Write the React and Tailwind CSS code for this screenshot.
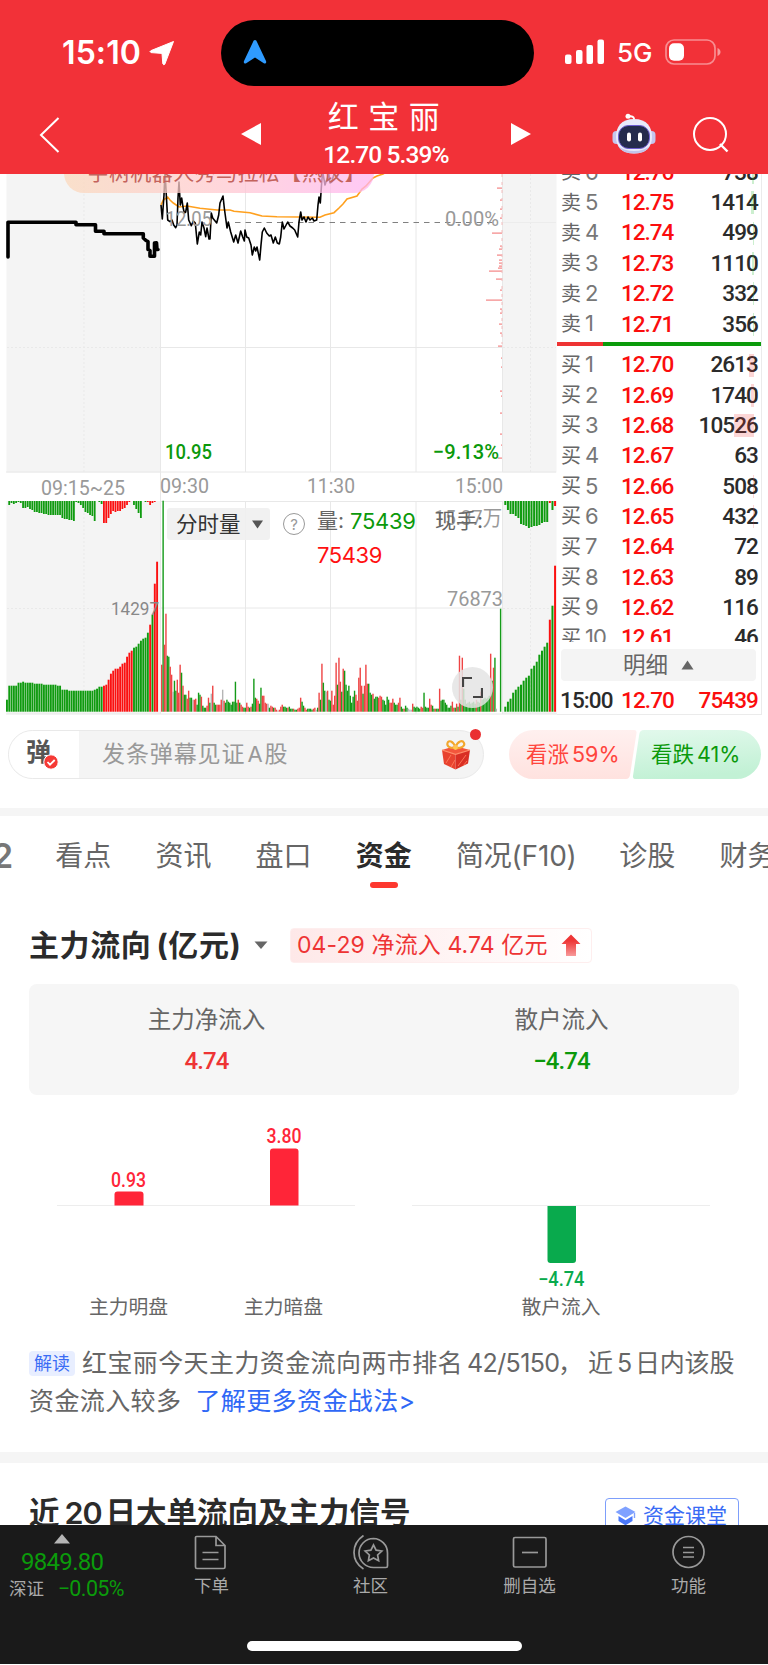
import React from 'react';

const SELL = [
  ['6', '12.76', '738', 2],
  ['5', '12.75', '1414', 3],
  ['4', '12.74', '499', 1],
  ['3', '12.73', '1110', 2],
  ['2', '12.72', '332', 1],
  ['1', '12.71', '356', 1],
];

const BUY = [
  ['1', '12.70', '2613', 5],
  ['2', '12.69', '1740', 3],
  ['3', '12.68', '10526', 20],
  ['4', '12.67', '63', 0],
  ['5', '12.66', '508', 1],
  ['6', '12.65', '432', 1],
  ['7', '12.64', '72', 0],
  ['8', '12.63', '89', 0],
  ['9', '12.62', '116', 0],
  ['10', '12.61', '46', 0],
];

// r = up, g = down, x = flat, number = height in px
const MINUTE_VOLUME =
  'r47 g211 r67 r98 g56 g55 r45 r37 x20 g31 g21 r32 r19 r47 g39 r26 g17 g17 r13 r21 g14 g14 x12 r12 r13 g7 g19 g17 r15 g6 g4 g4 r6 r14 g9 x18 r26 g9 g7 r7 r7 r7 r12 x22 r11 g9 g12 g10 g9 g7 g10 g10 g30 g9 r12 g9 r7 r5 g4 g4 r9 r5 g4 r5 g8 g33 g14 r13 r11 g8 g24 r16 r16 r9 r8 x8 g4 r6 r5 g4 r4 r2 x1 r2 r5 r7 g5 g5 g4 r4 g5 g3 g3 r3 g2 g2 r3 r4 r14 g10 g6 r4 r2 g3 g3 g3 g2 r3 r4 x2 g4 r19 g12 r48 g29 g21 x20 r21 g12 g11 r21 r7 r16 r49 g27 r54 r30 g20 r43 g41 g27 g21 g26 g16 g9 g15 g21 r17 r11 r34 r44 r26 g18 r26 r47 r28 g28 g19 g17 r18 g13 g15 g15 r14 r16 r15 g12 g11 g7 g15 g12 r9 r9 r13 g9 g7 g7 r9 r14 g5 g3 r3 g6 g4 x3 x2 x2 r8 g5 g4 g5 g4 g3 r5 r4 g19 g5 g4 g4 r13 r7 g6 g3 r3 g3 g3 r23 g11 g12 g12 g9 g7 g4 g4 g6 r10 r4 g4 r8 g5 r56 g12 r54 g23 g12 g8 g9 g10 g8 g9 g10 g8 r12 g10 g9 r20 g12 g13 g14 g13 g14 g16 r58 g31 r44 g54 x3 x0 x0 g103';

const AUCTION_VOLUME =
  'g12 g26 g26 g26 g26 g29 g29 g30 g29 g29 g29 g29 g28 g28 g28 g28 g27 g27 g27 g27 g27 g27 g26 g26 g22 g22 g22 g21 g21 g21 g21 g21 g21 g21 g21 g21 g21 g21 g22 g23 g25 g25 r26 r27 r32 r38 r41 r43 r43 r45 r48 r49 r55 r59 r61 g64 g65 g68 g71 g73 g74 g79 r87 g97 r128 r150';

const AUCTION_UNMATCHED =
  'x0 g4 g2 g3 g2 g1 g2 g7 g7 g6 g8 g9 g11 g11 g12 g12 g13 g13 g14 g14 g14 g14 g14 g14 g17 g18 g18 g19 g19 g20 g1 g2 g4 g7 g11 g12 g14 g15 g20 x0 g1 g3 r22 r22 r17 r13 r10 r11 r10 r10 r8 r7 r4 r1 x0 g4 g8 g12 g17 x0 g1 r1 r4 r2 r1 x0';

const CLOSE_VOLUME =
  'g5 g10 g13 g19 g22 g25 g27 g31 g34 g36 g43 g46 g50 g57 g61 g65 g69 r92 g106 r146';

const CLOSE_UNMATCHED =
  'g4 g9 g13 g13 g15 g17 g23 g24 g25 g27 g26 g25 g25 g24 g22 g21 g21 r2 g9 r5';

const PRICE_LINE =
  '161,205 162.3,219 164,195 165,172 166.3,195 167.7,220 170,221.7 172,220 173.7,225 175.7,227.7 177,225 178,198 179,182 180.3,205 181.7,198 183,207 184.3,213 185.7,212 187.3,203 188.7,220 191.3,225.7 193.3,221 195.3,223 197.3,244 199.3,232 200.7,235 202,222 204,228 205.7,236.7 207,228 209,239 210,239 211.3,213 212.7,218 216.7,223 218.7,215 220,203 223,196 224.3,208 227,228 228.3,222 230.7,232 233.7,242 235.7,235 238,243 240.7,231 242.7,237 244.3,241 245,230 246.7,237 248.7,238 251,245 252.3,255 254.3,247 255.7,251 257,247 259.7,260 261,245 262.3,232 264.3,228 266.7,233 269.3,236 271,235 273.3,243 275.3,237 277.3,243 279.3,244 280.7,237 282.3,222 284,229 287.7,222 290,226 292.7,228 294.7,230 297.7,237 299,222 300.7,212 302,220 304,217 306,222 308,217 310,220 312.3,218 314,221 316.7,220 318,205 319,197 320.3,203 321.7,182 322.7,172 325,185 327.3,178 328.7,173 330,183 331.7,182 334,174 335,168';

const AVG_LINE =
  '161,205 163.3,200 167.7,197 170,200 173.3,203 179,207 187,206 200,208.3 217,210 230,210 234,211.3 250,212.7 262,216 277,216.7 320,217.3 325,215 334,212.7 339,208 343,204 347,199 357,196 362,189 366,186 373,178 377,176 383,174 390,170';

const AUCTION_LINE =
  '8,257 8,222.3 76,222.3 76,224.7 95.5,224.7 95.5,231.3 104,231.3 104,233.7 143.3,233.7 143.3,238 146,240.5 148,241.5 148,249.5 150,250.5 150,256.3 154.5,256.3 154.5,243 156.5,242.7 157,249.5 158,249.5';

const TICKS = [
  [188, 5], [200, 2], [209, 2], [218, 2], [233, 10], [246, 2], [249, 3], [255, 5], [260, 3], [263, 3], [266, 3],
  [271, 13], [268, 4], [279, 6], [290, 2], [300, 16], [309, 2], [313, 2], [324, 3], [333, 2], [346, 4], [358, 1], [367, 1],
  [391, 2], [396, 1], [413, 2], [434, 2], [445, 1], [458, 4],
];

const COLORS = { r: '#fb1010', g: '#0f9b0f', x: '#b5b5b5' };
const SOFT = { r: '#ee4444', g: '#149a18', x: '#b5b5b5' };

const Bars = ({ data, x, step, width, base, down, colors = COLORS }) => (
  <g>
    {data.split(' ').map((item, i) => {
      const h = Number(item.slice(1));
      return (
        <rect key={i} x={x + i * step} y={down ? base : base - h} width={width} height={h} fill={colors[item[0]]} />
      );
    })}
  </g>
);

const ChartText = ({ x, y, w, size = 21, fill = '#999', weight = 400, children }) => (
  <text x={x} y={y} fontSize={size} fill={fill} fontWeight={weight} textLength={w} lengthAdjust="spacingAndGlyphs">
    {children}
  </text>
);

const StatusBar = () => (
  <div className="flex h-[100px] pt-5">
    <div className="flex w-[221px] pl-[62px] pt-[13px]">
      <span className="w-[87px] whitespace-nowrap text-[32px] font-semibold leading-10 tracking-[0.1px]">15:10</span>
      <svg width="26" height="26" viewBox="0 0 26 26" className="mt-[7px]">
        <path d="M24.5 1.5 15.8 24.2Q14.8 25.6 13.8 23.8L13 13.4 2 12.6Q0 11.6 2 10.6Z" fill="#fff" stroke="#fff" strokeLinejoin="round" />
      </svg>
    </div>
    <div className="h-[66px] w-[313px] rounded-full bg-black pl-[22px] pt-[19px]">
      <svg width="24" height="26" viewBox="0 0 24 26">
        <path d="M12 1c1 0 1.6.8 2 2l9 19c.7 2-.6 3.2-2.2 2.2L12 18.500l-8.800 5.700C1.600 25.200.300 24 1 22L10 3c.400-1.200 1-2 2-2Z" fill="#2f9bff" />
      </svg>
    </div>
    <div className="flex pl-[31px] pt-[19px]">
      <svg width="40" height="26" viewBox="0 0 40 26">
        <rect x="0" y="15.500" width="6.500" height="9.500" rx="2" fill="#fff" />
        <rect x="11" y="11" width="6.500" height="14" rx="2" fill="#fff" />
        <rect x="21.500" y="6" width="6.500" height="19" rx="2" fill="#fff" />
        <rect x="32.500" y="0.500" width="6.500" height="24.500" rx="2" fill="#fff" />
      </svg>
      <span className="ml-3 w-[37px] text-[26px] font-medium leading-[28px]">5G</span>
      <svg width="58" height="26" viewBox="0 0 58 26" className="ml-[11px]">
        <rect x="1" y="1" width="49" height="24" rx="8" fill="none" stroke="#fff" strokeOpacity=".45" strokeWidth="1.700" />
        <rect x="4" y="4.200" width="15" height="17.500" rx="5" fill="#fff" />
        <path d="M52.500 9c4 1.500 4 6.500 0 8Z" fill="#fff" fillOpacity=".5" />
      </svg>
    </div>
  </div>
);

const Robot = () => (
  <svg width="46" height="42" viewBox="0 0 46 42">
    <path d="M23 8V5.500Q22.500 3 17 3" fill="none" stroke="#fff" strokeWidth="1.800" />
    <circle cx="17" cy="3.200" r="2.500" fill="#fff" />
    <rect x="1.500" y="18" width="8" height="13" rx="4" fill="#c5c6ee" />
    <rect x="36.500" y="18" width="8" height="13" rx="4" fill="#c5c6ee" />
    <path d="M23 6C36 6 41 14 41 24S35 40.500 23 40.500 5 34 5 24 10 6 23 6Z" fill="#e9eafb" />
    <path d="M7 33Q13 38 23 38t16-5Q35 40.500 23 40.500T7 33Z" fill="#c3c4ea" />
    <rect x="7.500" y="12.500" width="31" height="23" rx="10" fill="#252b4d" stroke="#6c5bd0" strokeWidth="1" />
    <rect x="16" y="19.500" width="4" height="9" rx="2" fill="#fff" />
    <rect x="27" y="19.500" width="4" height="9" rx="2" fill="#fff" />
  </svg>
);

const StockHeader = () => (
  <div className="flex h-[74px]">
    <svg width="22" height="38" viewBox="0 0 22 38" className="ml-[38px] mt-4">
      <path d="M20.500 2 3 19 20.500 36" fill="none" stroke="#fff" strokeWidth="2" />
    </svg>
    <svg width="22" height="24" viewBox="0 0 22 24" className="ml-[180px] mt-[22px]">
      <path d="M1 12 21 1v22Z" fill="#fff" />
    </svg>
    <div className="flex w-[248px] flex-col items-center">
      <div className="mt-[-2px] pl-[5px] text-[31px] leading-[38px] tracking-[9.5px]">红宝丽</div>
      <div className="whitespace-nowrap pt-px font-['Roboto'] text-[24.5px] font-medium leading-[36px] tracking-[-0.9px]">12.70 5.39%</div>
    </div>
    <svg width="22" height="24" viewBox="0 0 22 24" className="mt-[22px]">
      <path d="M21 12 1 1v22Z" fill="#fff" />
    </svg>
    <div className="ml-[79px] mt-[13px]">
      <Robot />
    </div>
    <svg width="38" height="38" viewBox="0 0 38 38" className="ml-[35px] mt-4">
      <circle cx="18" cy="18" r="16" fill="none" stroke="#fff" strokeWidth="2" />
      <path d="m28 28 7.500 7.500" stroke="#fff" strokeWidth="2.400" />
    </svg>
  </div>
);

const MinuteChart = () => (
  <svg width="557" height="541" viewBox="0 174 557 541" className="block" fontFamily="Roboto, 'Noto Sans CJK SC', sans-serif">
    <defs>
      <linearGradient id="danmu" x1="0" x2="1">
        <stop offset="0" stopColor="#fbd9bd" />
        <stop offset=".5" stopColor="#ffc9cf" />
        <stop offset="1" stopColor="#ffb6f2" />
      </linearGradient>
    </defs>

    {/* call auction panels */}
    <path d="M6.500 174h154v298.500H6.500ZM502.500 174h54v298.500h-54ZM6.500 501h154v213H6.500ZM502.500 501h54v213h-54Z" fill="#f4f4f4" />
    <path d="M84 174v298M530.500 174v298M7 347.500h153M503 347.500h53M84 501v213M530.500 501v213M7 608.500h153M503 608.500h53" stroke="#e9e9e9" strokeDasharray="2 2" fill="none" />
    <path d="M160.500 174v540M245.500 174v298M330.500 174v298M416 174v298M502.500 174v298M160 347.500h342M6 472h550M245.500 501v213M330.500 501v213M416 501v213M502.500 501v213M160 501.500h342M160 608h342M6 714h551" stroke="#e8e8e8" fill="none" />
    <path d="M7 222.500h153M502 222.500h54" stroke="#ececec" fill="none" />
    <path d="M235 222.500h263" stroke="#808080" strokeDasharray="5.500 5" />

    {TICKS.map(([y, w]) => (
      <rect key={y} x={502 - w} y={y - 0.7} width={w} height="1.700" fill="#f7a8a8" />
    ))}
    <path d="M502 174v170" stroke="#f3bcbc" strokeDasharray="3 5" />

    <polyline points={AVG_LINE} fill="none" stroke="#ffa01e" strokeWidth="1.600" />
    <polyline points={PRICE_LINE} fill="none" stroke="#000" strokeWidth="1.600" strokeLinejoin="round" />
    <polyline points={AUCTION_LINE} fill="none" stroke="#000" strokeWidth="3.600" strokeLinejoin="round" strokeLinecap="round" />

    <ChartText x="165.500" y="226" w="46.500">12.05</ChartText>
    <ChartText x="445" y="226" w="54">0.00%</ChartText>
    <ChartText x="165" y="459" w="47" fill="#0b990b" weight="500">10.95</ChartText>
    <ChartText x="433" y="459" w="66" fill="#0b990b" weight="500">−9.13%</ChartText>

    {/* danmu bubble passing over the price line */}
    <rect x="64" y="153" width="310" height="40" rx="20" fill="url(#danmu)" opacity=".75" />
    <text x="87.500" y="179.500" fontSize="21" fill="#c4625c" textLength="278">宇树机器人秀马拉松【热议】</text>

    <ChartText x="41" y="494.500" w="84">09:15~25</ChartText>
    <ChartText x="160" y="493" w="49">09:30</ChartText>
    <ChartText x="307" y="493" w="48">11:30</ChartText>
    <ChartText x="455" y="493" w="48">15:00</ChartText>

    <Bars data={AUCTION_UNMATCHED} x={6} step={2.31} width={1.8} base={501} down />
    <Bars data={AUCTION_VOLUME} x={6} step={2.31} width={1.9} base={711.7} />
    <Bars data={MINUTE_VOLUME} x={161} step={1.418} width={1.4} base={711.7} colors={SOFT} />
    <Bars data={CLOSE_UNMATCHED} x={504.3} step={2.62} width={2} base={501} down />
    <Bars data={CLOSE_VOLUME} x={504.3} step={2.62} width={2} base={711.7} />

    <ChartText x="111" y="615" w="48" size="17.500" fill="#888">14297</ChartText>
    <ChartText x="447" y="606" w="56">76873</ChartText>
    <ChartText x="434" y="525" w="68">15.37万</ChartText>
  </svg>
);

const ChartArea = () => (
  <div className="relative w-[557px] shrink-0">
    <MinuteChart />
    <div className="absolute left-[167px] top-[334px] flex h-8 w-[103px] items-center rounded-[3px] bg-[#f0f0f0]/90 pl-[9px] text-[21.5px] text-[#333]">
      分时量
      <svg width="13" height="9" viewBox="0 0 13 9" className="ml-2.5">
        <path d="M1 .5h11L6.500 8.500Z" fill="#555" />
      </svg>
    </div>
    <div className="absolute left-[283px] top-[339px] flex h-[22px] w-[22px] items-center justify-center rounded-full border-[1.5px] border-[#999] text-[15px] leading-none text-[#999]">?</div>
    <div className="absolute left-[317px] top-[330px] w-[180px] text-[21px] leading-[34px] text-[#666]">
      <div className="flex whitespace-nowrap">
        <span className="w-[33px]">量:</span>
        <span className="w-[85px] text-[22px] tracking-[-0.3px] text-[#0b990b]">75439</span>
        <span>现手:</span>
      </div>
      <div className="text-[22px] tracking-[-0.4px] text-[#f11]">75439</div>
    </div>
    <div className="absolute left-[452px] top-[493px] flex h-[41px] w-[41px] items-center justify-center rounded-full bg-[#e4e4e4]/85">
      <svg width="21" height="21" viewBox="0 0 21 21">
        <path d="M1 10V1h9M20 11v9h-9" fill="none" stroke="#444" strokeWidth="2.200" />
      </svg>
    </div>
  </div>
);

const QuoteRow = ({ label, row, barClass }) => (
  <div className="relative flex h-[30.35px] items-center">
    <span className="w-6 text-[20px] text-[#666]">{label}</span>
    <span className="w-[36px] text-[22px] tracking-[-1px] text-[#777]">{row[0]}</span>
    <span className="w-[60px] pt-px font-['Roboto'] text-[22.5px] font-medium tracking-[-1px] text-[#fb0d0d]">{row[1]}</span>
    <span className="mr-[-1px] flex-1 pt-px text-right font-['Roboto'] text-[22.5px] font-medium tracking-[-0.9px] text-[#2b2b2b]">{row[2]}</span>
    <span className={`absolute right-[3px] top-1 h-[23px] ${barClass}`} style={{ width: row[3] }} />
  </div>
);

const OrderBook = () => (
  <div className="flex w-[205px] flex-col border-r border-b border-[#ebebeb]">
    <div className="h-[468px] shrink-0 overflow-hidden">
      <div className="-mt-[17px] pl-1 pr-1">
        {SELL.map((row) => (
          <QuoteRow key={row[0]} label="卖" row={row} barClass="bg-[#35c040]/25" />
        ))}
      </div>
      <div className="mb-1 mt-[3px] flex h-[3.5px]">
        <div className="w-[46px] bg-[#ee3333]" />
        <div className="flex-1 bg-[#0b9b0b]" />
      </div>
      <div className="pl-1 pr-1">
        {BUY.map((row) => (
          <QuoteRow key={row[0]} label="买" row={row} barClass="bg-[#ee3333]/20" />
        ))}
      </div>
    </div>
    <div className="ml-1 mt-[7px] flex h-8 w-[195px] shrink-0 items-center justify-center rounded-sm bg-[#f4f4f4] text-[22.5px] leading-8 text-[#666]">
      明细
      <svg width="13" height="10" viewBox="0 0 13 10" className="ml-[13px]">
        <path d="M6.500.5 12.500 9.500H.5Z" fill="#666" />
      </svg>
    </div>
    <div className="flex flex-1 items-center pl-[3px] pr-[3px] pt-[5px] font-['Roboto'] text-[22.5px] font-medium leading-7 tracking-[-0.9px]">
      <span className="w-[61px] text-[#2b2b2b]">15:00</span>
      <span className="text-[#fb0d0d]">12.70</span>
      <span className="flex-1 text-right text-[#fb0d0d]">75439</span>
    </div>
  </div>
);

const Gift = () => (
  <svg width="30" height="31" viewBox="0 0 30 31">
    <path d="m1 11 13-4 15 4-14.500 5Z" fill="#f3563c" />
    <path d="m1 11 13.500 4v15.500L3 25Z" fill="#e8432f" />
    <path d="m29 11-14.500 4v15.500L27 24.500Z" fill="#d92f24" />
    <path d="m5 24 5-8m0 12 4-7M25 16l-8 11m9-5-4 5" stroke="#ff7b5b" strokeWidth=".9" />
    <path d="m1 11 13.500 4.300L29 11" fill="none" stroke="#ff8f6c" strokeWidth="1.200" />
    <path d="M14 9C9 9.500 5.500 7 6.500 4S12 1.500 14.500 8C17 1.500 21.500 1 23 4S20 9.500 15 9Z" fill="none" stroke="#f2a72d" strokeWidth="2.100" />
    <circle cx="14.500" cy="8.500" r="2.400" fill="#ffc551" />
  </svg>
);

const CommentBar = () => (
  <div className="flex h-[93px] pl-2 pt-[15px]">
    <div className="relative flex h-[49px] w-[476px] items-center overflow-visible rounded-full border border-[#e9e9e9] bg-[#f4f4f4]">
      <div className="flex h-[47px] w-[70px] items-center rounded-l-full bg-white pb-1 pl-[17px] text-[25px] font-bold text-[#555]">弹</div>
      <svg width="16" height="16" viewBox="0 0 16 16" className="absolute left-[34px] top-[23px]">
        <circle cx="8" cy="8" r="7.200" fill="#f53a35" stroke="#fff" />
        <path d="m4.500 8 2.500 2.700 4.700-4.700" fill="none" stroke="#fff" strokeWidth="1.800" />
      </svg>
      <span className="ml-[23px] flex-1 whitespace-nowrap text-[23px] tracking-[0.9px] text-[#999]">发条弹幕见证<span className="pl-[2px] pr-px text-[22px]">A</span>股</span>
      <div className="mr-3">
        <Gift />
      </div>
      <span className="absolute right-[2px] top-[-2px] h-[11px] w-[11px] rounded-full bg-[#ea2f31]" />
    </div>
    <div className="relative ml-[25px] h-[49px] w-[252px]">
      <svg width="252" height="49" viewBox="0 0 252 49" className="absolute inset-0">
        <defs>
          <linearGradient id="up" x1="0" x2="0" y1="0" y2="1">
            <stop offset="0" stopColor="#fff0ef" />
            <stop offset="1" stopColor="#ffe2df" />
          </linearGradient>
          <linearGradient id="down" x1="0" x2="0.200" y1="0" y2="1">
            <stop offset="0" stopColor="#e2f9ec" />
            <stop offset="1" stopColor="#c2f1d5" />
          </linearGradient>
        </defs>
        <path d="M24.500 0H125q3 0 2.500 3L121 45q-.7 4-4 4H24.500A24.500 24.500 0 0 1 24.500 0Z" fill="url(#up)" />
        <path d="M227.500 0H135q-4 0-4.700 4L124 46q-.5 3 3 3h100.500a24.500 24.500 0 0 0 0-49Z" fill="url(#down)" />
      </svg>
      <div className="relative flex h-[49px] items-center text-[21.5px]">
        <span className="ml-[17px] w-[125px] whitespace-nowrap text-[#ff453d]">看涨<span className="ml-[3px]">59%</span></span>
        <span className="whitespace-nowrap text-[#0b990b]">看跌<span className="ml-[3px]">41%</span></span>
      </div>
    </div>
  </div>
);

const Tabs = () => (
  <div className="flex h-[84px] gap-[44.2px] overflow-hidden whitespace-nowrap pt-[18px] text-[28px] leading-[44px] text-[#666]">
    <span className="-ml-2 w-[19px] text-[34px] font-semibold text-[#777]">2</span>
    <span>看点</span>
    <span>资讯</span>
    <span>盘口</span>
    <div className="flex flex-col items-center font-bold text-[#2b2b2b]">
      资金
      <span className="mt-[4px] h-[6px] w-7 rounded-full bg-[#fd382f]" />
    </div>
    <span className="w-[119px] tracking-[-0.2px]">简况(F10)</span>
    <span>诊股</span>
    <span>财务</span>
  </div>
);

const FlowBars = () => (
  <svg width="768" height="220" viewBox="0 1110 768 220" className="block" fontFamily="Roboto, sans-serif">
    <path d="M57 1205.500h298M412 1205.500h298" stroke="#ededed" />
    <path d="M114.500 1205.500v-11q0-3 3-3h23q3 0 3 3v11Z" fill="#ff2538" />
    <path d="M270 1205.500v-54q0-3 3-3h22.500q3 0 3 3v54Z" fill="#ff2538" />
    <path d="M547.500 1206v54q0 3 3 3h22.500q3 0 3-3v-54Z" fill="#09aa4d" />
    <ChartText x="111" y="1187" w="35" size="19.500" weight="500" fill="#ff2538">0.93</ChartText>
    <ChartText x="266.500" y="1143" w="35" size="19.500" weight="500" fill="#ff2538">3.80</ChartText>
    <ChartText x="538" y="1286" w="46.500" size="19.500" weight="500" fill="#09aa4d">−4.74</ChartText>
    <g fontFamily="'Noto Sans CJK SC', sans-serif" fontSize="19.800" fill="#666" textAnchor="middle">
      <text x="128.500" y="1314">主力明盘</text>
      <text x="283.500" y="1314">主力暗盘</text>
      <text x="561" y="1314">散户流入</text>
    </g>
  </svg>
);

const FundFlow = () => (
  <section className="h-[552px]">
    <div className="flex h-[84px] items-center pl-[29px] pt-[6px]">
      <h2 className="w-[213px] whitespace-nowrap text-[30px] font-bold tracking-[0.6px] text-[#2b2b2b]">
        主力流向<span className="pl-[5px]">(</span>亿元)
      </h2>
      <svg width="14" height="9" viewBox="0 0 14 9" className="ml-3">
        <path d="M.5.5h13L7 8Z" fill="#666" />
      </svg>
      <div className="ml-[22px] flex h-[35px] w-[302px] items-center rounded border border-[#feeeee] bg-linear-to-r from-[#fee8e8] to-white pl-[6px] text-[23px] text-[#ee3434]">
        <span className="w-[252px] whitespace-nowrap tracking-[0.1px]">04-29 净流入 4.74 亿元</span>
        <svg width="20" height="23" viewBox="0 0 20 23" className="ml-3">
          <defs>
            <linearGradient id="arrow" x1="0" x2="0" y1="0" y2="1">
              <stop offset=".3" stopColor="#ee3636" />
              <stop offset="1" stopColor="#f79a9a" />
            </linearGradient>
          </defs>
          <path d="M10 .5 19.500 10H15v12H5V10H.5Z" fill="url(#arrow)" />
        </svg>
      </div>
    </div>
    <div className="mx-[29px] flex h-[111px] rounded-lg bg-[#f6f6f6] pt-4 text-center">
      <div className="flex-1">
        <div className="text-[23.5px] leading-10 text-[#666]">主力净流入</div>
        <div className="pt-px font-['Roboto'] text-[24px] font-medium leading-10 tracking-[-0.9px] text-[#ee3434]">4.74</div>
      </div>
      <div className="flex-1">
        <div className="text-[23.5px] leading-10 text-[#666]">散户流入</div>
        <div className="pt-px font-['Roboto'] text-[24px] font-medium leading-10 tracking-[-0.9px] text-[#0b990b]">−4.74</div>
      </div>
    </div>
    <div className="pt-[15px]">
      <FlowBars />
    </div>
    <div className="-mt-1 whitespace-nowrap pl-[29px] text-[25px] leading-[38px] tracking-[0.4px] text-[#666]">
      <div className="flex items-center pt-[18px]">
        <span className="mr-[7px] h-[25px] w-[46px] rounded bg-[#e8eeff] text-center text-[18px] leading-[25px] tracking-normal text-[#3a6cf5]">解读</span>
        <span className="w-[385px]">红宝丽今天主力资金流向两市排名</span>
        <span className="w-[91px] tracking-[-0.6px]">42/5150</span>
        <span className="w-[30px]">，</span>
        <span className="w-[29px]">近</span>
        <span className="w-[18px]">5</span>
        <span className="tracking-[-0.2px]">日内该股</span>
      </div>
      <div>
        资金流入较多<span className="ml-[14px] text-[#2f68f6]">了解更多资金战法&gt;</span>
      </div>
    </div>
  </section>
);

const BigOrders = () => (
  <section className="flex h-[62px] justify-between overflow-hidden pl-[29px] pr-[29px]">
    <h2 className="flex whitespace-nowrap pt-[29px] text-[30.5px] font-bold leading-[42px] text-[#2b2b2b]">
      近<span className="mx-[5px] w-[36px] font-semibold tracking-[-1px]">20</span>日大单流向及主力信号
    </h2>
    <div className="mt-[35px] flex h-[38px] w-[134px] items-center rounded border-[1.5px] border-[#7d9efb] pb-[3px] pl-[9px] text-[21px] text-[#3a6cf5]">
      <svg width="21" height="20" viewBox="0 0 21 20" className="mr-[7px]">
        <path d="M10.500.5 20.500 6l-10 6-10-6Z" fill="#7fa1ff" />
        <path d="m3.500 10 7 4.200 7-4.200v5l-7 4.300-7-4.300Z" fill="#4a78fa" />
        <path d="M19.500 7v5" stroke="#7fa1ff" strokeWidth="1.400" />
      </svg>
      资金课堂
    </div>
  </section>
);

const NavItem = ({ label, children }) => (
  <div className="flex w-[159px] flex-col items-center">
    <svg width="38" height="38" viewBox="0 0 38 38" className="mt-2" fill="none" stroke="#999" strokeWidth="1.700">
      {children}
    </svg>
    <span className="text-[17.5px] leading-[30px] text-[#aaa]">{label}</span>
  </div>
);

const BottomNav = () => (
  <nav className="h-[139px] bg-[#1a1a1a]">
    <div className="flex h-[115px]">
      <div className="flex w-[132px] shrink-0 flex-col pl-[9px] pt-[9px]">
        <svg width="16" height="10" viewBox="0 0 16 10" className="ml-[45px]">
          <path d="M8 0 16 9.500H0Z" fill="#b5b5b5" />
        </svg>
        <div className="whitespace-nowrap pl-3 pt-px font-['Roboto'] text-[24px] leading-[34px] tracking-[-0.7px] text-[#0b9b0b]">9849.80</div>
        <div className="mt-[-1px] flex w-[115px] items-center justify-between whitespace-nowrap leading-[22px]">
          <span className="text-[17.5px] text-[#aaa]">深证</span>
          <span className="font-['Roboto'] text-[21.5px] tracking-[-0.6px] text-[#0b9b0b]">−0.05%</span>
        </div>
      </div>
      <NavItem label="下单">
        <path d="M3.500 3.500H23l9 9V34q0 1.500-1.500 1.500H4Q2.500 35.500 2.500 34V4.500q0-1 1-1ZM23 4v8.500h8.500M9.500 19.500h16M9.500 26.500h16" />
      </NavItem>
      <NavItem label="社区">
        <path d="M21.500 5.500A14.500 14.500 0 0 0 21.500 34.500H34q1.500 0 1.500-1.500V20A14.500 14.500 0 0 0 21.500 5.500ZM11.500 2.500Q2 9 2 19.500t9.500 16.500" />
        <path d="m21.500 12 2.600 5.200 5.700.8-4.200 4 1 5.700-5.100-2.700-5.100 2.700 1-5.700-4.200-4 5.700-.8Z" />
      </NavItem>
      <NavItem label="删自选">
        <rect x="2.500" y="4.500" width="32.500" height="29.500" rx="1.500" />
        <path d="M11 19.500h16" />
      </NavItem>
      <NavItem label="功能">
        <circle cx="18.500" cy="19" r="15.500" />
        <path d="M13 14.500h11M13 19.500h11M13 24h11" />
      </NavItem>
    </div>
    <div className="mx-auto mt-px h-[10px] w-[275px] rounded-full bg-white" />
  </nav>
);

export default function App() {
  return (
    <div className="h-[1665px] w-[768px] overflow-hidden bg-white font-['Inter','Noto_Sans_CJK_SC',sans-serif]">
      <header className="h-[174px] bg-[#f23138] text-white">
        <StatusBar />
        <StockHeader />
      </header>
      <div className="flex h-[541px]">
        <ChartArea />
        <OrderBook />
      </div>
      <CommentBar />
      <div className="h-2 bg-[#f5f5f5]" />
      <Tabs />
      <FundFlow />
      <div className="h-[11px] bg-[#f5f5f5]" />
      <BigOrders />
      <BottomNav />
    </div>
  );
}
